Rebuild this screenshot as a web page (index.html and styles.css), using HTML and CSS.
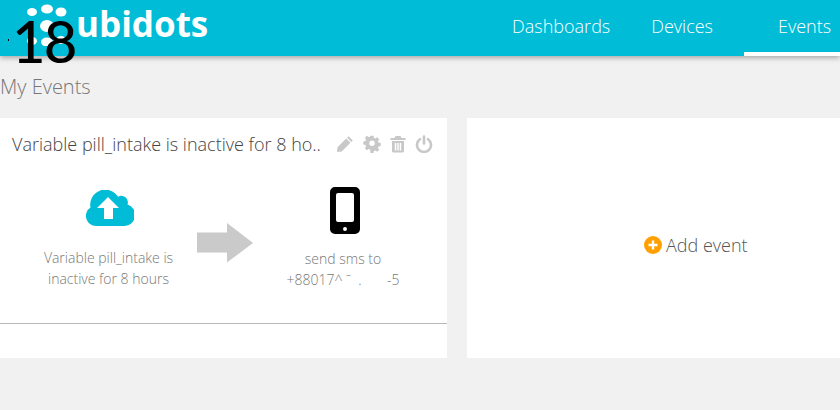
FILE: index.html
```html
<!DOCTYPE html>
<html lang="en">
<head>
    <meta charset="UTF-8">
    <meta name="viewport" content="width=device-width, initial-scale=1.0">
    <title>My Events</title>
    <link rel="stylesheet" href="styles.css">
</head>
<body>
    <header class="topbar">
        <div class="brand">
            <svg class="brand-mark" width="44" height="44" viewBox="0 0 44 44" fill="#fff">
                <ellipse cx="5" cy="10" rx="5" ry="4"/>
                <ellipse cx="20" cy="7" rx="6" ry="4.500"/>
                <ellipse cx="34" cy="10" rx="5.500" ry="4.500"/>
                <ellipse cx="20" cy="24" rx="7" ry="6"/>
                <ellipse cx="5" cy="39" rx="5" ry="4"/>
                <ellipse cx="20" cy="40" rx="6" ry="4.500"/>
                <ellipse cx="34" cy="38" rx="5" ry="4"/>
            </svg>
            <span class="brand-name">ubidots</span>
        </div>
        <nav class="nav">
            <a class="nav-item nav-dashboards">Dashboards</a>
            <a class="nav-item nav-devices">Devices</a>
            <a class="nav-item nav-active">Events</a>
        </nav>
    </header>

    <span class="stray-dot"></span>
    <span class="overlay-number">18</span>

    <h1 class="page-title">My Events</h1>

    <main class="cards">
        <section class="card event-card">
            <div class="event-head">
                <h2 class="event-title">Variable pill_intake is inactive for 8 ho..</h2>
                <div class="event-tools">
                    <svg width="18" height="18" viewBox="0 0 18 18" fill="#c8c8c8"><path d="M12.6 1.2 16.8 5.4 15.3 6.9 11.100 2.700ZM10.200 3.600 14.400 7.800 5.700 16.500 1 17 1.500 12.300Z"/></svg>
                    <svg width="18" height="18" viewBox="0 0 18 18" fill="#c8c8c8" fill-rule="evenodd"><path d="M7.500 1h3l.5 2.300 1.300.6 2-1.300 2.100 2.100-1.300 2 .6 1.300 2.300.5v3l-2.300.5-.6 1.300 1.300 2-2.100 2.100-2-1.300-1.300.6-.5 2.300h-3L7 15.200l-1.300-.6-2 1.300-2.100-2.100 1.300-2-.6-1.300L0 10V7l2.300-.5.6-1.300-1.300-2 2.100-2.100 2 1.300L7 1.800ZM9 6a2.800 2.800 0 1 0 0 5.600A2.800 2.800 0 0 0 9 6Z" transform="translate(.3 -.2) scale(.97)"/></svg>
                    <svg width="16" height="18" viewBox="0 0 16 18" fill="#c8c8c8" fill-rule="evenodd"><path d="M5.500 1h5l1 2H15.500v2H.5V3h4ZM2 6h12v10.500L13 17.500H3L2 16.500ZM4.800 8v7.500H6.300V8ZM7.300 8v7.500H8.700V8ZM9.700 8v7.500h1.500V8Z"/></svg>
                    <svg width="18" height="18" viewBox="0 0 18 18" fill="none" stroke="#c8c8c8" stroke-width="2.600" stroke-linecap="round"><path d="M5 4.200A7 7 0 1 0 13 4.200"/><path d="M9 1.500V8.500"/></svg>
                </div>
            </div>
            <div class="event-flow">
                <div class="flow-step flow-trigger">
                    <svg class="flow-icon" width="48" height="36" viewBox="0 0 48 36">
                        <path fill="#00bcd7" d="M10 36A10 10 0 0 1 4.500 17.600 15 15 0 0 1 32 6.800 6.500 6.500 0 0 1 41.500 14.500 11 11 0 0 1 38 36Z"/>
                        <path fill="#fff" d="M22 7 33 18H27V29H18V18H11Z"/>
                    </svg>
                    <p class="flow-text">Variable pill_intake is inactive for 8 hours</p>
                </div>
                <svg class="flow-arrow" width="56" height="40" viewBox="0 0 56 40" fill="#cacaca"><path d="M0 9.500H30V0L56 20 30 39.500V29.500H0Z"/></svg>
                <div class="flow-step flow-action">
                    <svg class="flow-icon" width="30" height="47" viewBox="0 0 30 47" fill-rule="evenodd"><path d="M5 0H25A5 5 0 0 1 30 5V42A5 5 0 0 1 25 47H5A5 5 0 0 1 0 42V5A5 5 0 0 1 5 0ZM8 6A2 2 0 0 0 6 8V33A2 2 0 0 0 8 35H22A2 2 0 0 0 24 33V8A2 2 0 0 0 22 6ZM15 40A2 2 0 1 0 15 44 2 2 0 1 0 15 40Z"/></svg>
                    <p class="flow-text">send sms to<br><span class="phone">+88017^ ˉ  .       -5</span></p>
                </div>
            </div>
            <div class="event-foot"></div>
        </section>

        <section class="card add-card">
            <span class="add-icon">
                <svg width="18" height="18" viewBox="0 0 18 18"><circle cx="9" cy="9" r="9" fill="#ffa000"/><path d="M9 4.500V13.500M4.500 9H13.500" stroke="#fff" stroke-width="2.400"/></svg>
            </span>
            <span class="add-label">Add event</span>
        </section>
    </main>
</body>
</html>
```

FILE: styles.css
```css
* {
    box-sizing: border-box;
}
body {
    margin: 0;
    height: 410px;
    overflow: hidden;
    position: relative;
    background-color: #f1f1f1;
    font-family: 'Open Sans', sans-serif;
    font-weight: 300;
    color: #666;
}
.topbar {
    display: flex;
    justify-content: space-between;
    height: 56px;
    background-color: #00bcd7;
    box-shadow: 0 2px 5px rgba(0, 0, 0, 0.3);
}
.brand {
    display: flex;
    align-items: flex-start;
    padding-left: 27px;
}
.brand-mark {
    margin-top: 2px;
}
.brand-name {
    margin: 0 0 0 5px;
    font-family: 'Open Sans', sans-serif;
    font-weight: 700;
    font-size: 35px;
    line-height: 48px;
    color: #fff;
}
.nav {
    display: flex;
    color: #fff;
    font-size: 18px;
    line-height: 52px;
}
.nav-item {
    display: block;
    height: 56px;
}
.nav-dashboards {
    margin-right: 41px;
}
.nav-devices {
    margin-right: 31px;
}
.nav-active {
    width: 96px;
    padding-left: 34px;
    border-bottom: 4px solid #fff;
}
.stray-dot {
    position: absolute;
    left: 8px;
    top: 39px;
    width: 1px;
    height: 2px;
    background-color: #000;
}
.overlay-number {
    position: absolute;
    left: 12px;
    top: 6px;
    font-family: 'Lato', sans-serif;
    font-weight: 500;
    font-size: 58px;
    letter-spacing: -2px;
    line-height: 70px;
    color: #000;
}
.page-title {
    margin: 17px 0 18px;
    font-size: 20px;
    font-weight: 300;
    line-height: 27px;
    color: #777;
}
.cards {
    display: grid;
    grid-template-columns: 447px 400px;
    gap: 20px;
}
.card {
    height: 240px;
    background-color: #fff;
}
.event-card {
    display: flex;
    flex-direction: column;
}
.event-head {
    display: flex;
    justify-content: space-between;
    align-items: center;
    padding: 13px 14px 0 12px;
}
.event-title {
    margin: 0;
    font-size: 18px;
    font-weight: 300;
    line-height: 26px;
    color: #444;
    white-space: nowrap;
}
.event-tools {
    display: flex;
    align-items: center;
    gap: 9px;
}
.event-flow {
    display: flex;
    align-items: flex-start;
    height: 166px;
    padding-top: 30px;
}
.flow-step {
    display: flex;
    flex-direction: column;
    align-items: center;
    text-align: center;
}
.flow-trigger {
    width: 219px;
    padding-top: 3px;
}
.flow-action {
    width: 180px;
    margin-left: 24px;
}
.flow-arrow {
    margin: 36px -22px 0 -22px;
}
.flow-text {
    width: 150px;
    margin: 21px 0 0;
    font-size: 14px;
    line-height: 21px;
    color: #777;
}
.flow-trigger .flow-text {
    margin-left: -2px;
}
.flow-action .flow-text {
    margin: 14px 0 0 -4px;
}
.phone {
    white-space: pre;
}
.event-foot {
    flex: 1;
    border-top: 1px solid #b8b8b8;
}
.add-card {
    display: flex;
    align-items: center;
    padding-left: 177px;
    padding-top: 14px;
}
.add-icon {
    display: flex;
    margin-right: 4px;
}
.add-label {
    font-size: 18px;
    color: #555;
}
```
